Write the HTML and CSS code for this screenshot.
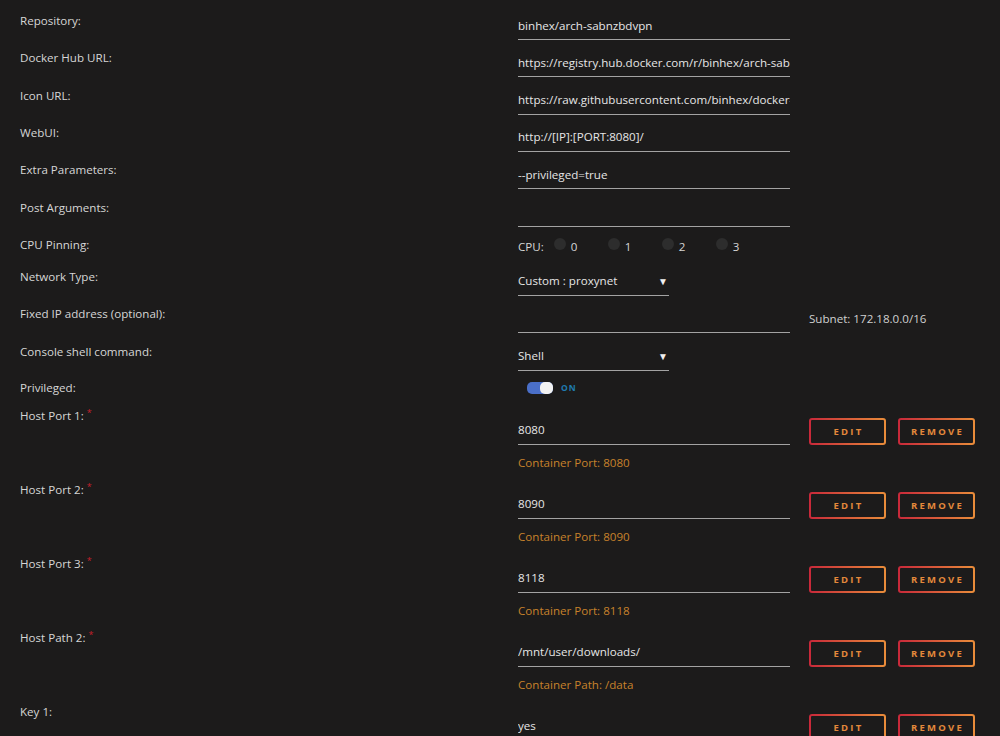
FILE: index.html
```html
<!DOCTYPE html>
<html lang="en">

<head>
  <meta charset="UTF-8" />
  <meta name="viewport" content="width=device-width, initial-scale=1" />
  <title>Edit Container</title>
  <link rel="stylesheet" href="styles.css">
</head>

<body>
  <div class="form">
    <div class="row">
      <div class="label">Repository:</div>
      <div class="field"><input type="text" value="binhex/arch-sabnzbdvpn" /></div>
    </div>
    <div class="row">
      <div class="label">Docker Hub URL:</div>
      <div class="field"><input type="text" value="https://registry.hub.docker.com/r/binhex/arch-sabnzbdvpn/" /></div>
    </div>
    <div class="row">
      <div class="label">Icon URL:</div>
      <div class="field"><input type="text" value="https://raw.githubusercontent.com/binhex/docker-templates/master/binhex/images/sabnzbd-icon.png" /></div>
    </div>
    <div class="row">
      <div class="label">WebUI:</div>
      <div class="field"><input type="text" value="http://[IP]:[PORT:8080]/" /></div>
    </div>
    <div class="row">
      <div class="label">Extra Parameters:</div>
      <div class="field"><input type="text" value="--privileged=true" /></div>
    </div>
    <div class="row">
      <div class="label">Post Arguments:</div>
      <div class="field"><input type="text" value="" /></div>
    </div>
    <div class="row row-cpu">
      <div class="label">CPU Pinning:</div>
      <div class="cpu">
        <span class="cpu-title">CPU:</span>
        <span class="cpu-item"><span class="dot"></span>0</span>
        <span class="cpu-item"><span class="dot"></span>1</span>
        <span class="cpu-item"><span class="dot"></span>2</span>
        <span class="cpu-item"><span class="dot"></span>3</span>
      </div>
    </div>
    <div class="row">
      <div class="label">Network Type:</div>
      <div class="field">
        <div class="select"><span>Custom : proxynet</span><span class="arrow">&#9660;</span></div>
      </div>
    </div>
    <div class="row">
      <div class="label">Fixed IP address (optional):</div>
      <div class="field"><input type="text" value="" /></div>
      <div class="note">Subnet: 172.18.0.0/16</div>
    </div>
    <div class="row row-short">
      <div class="label">Console shell command:</div>
      <div class="field">
        <div class="select"><span>Shell</span><span class="arrow">&#9660;</span></div>
      </div>
    </div>
    <div class="row row-switch">
      <div class="label">Privileged:</div>
      <div class="switch-wrap">
        <span class="switch"></span>
        <span class="switch-text">ON</span>
      </div>
    </div>

    <div class="row row-port">
      <div class="label">Host Port 1:<sup class="req">*</sup></div>
      <div class="field">
        <input type="text" value="8080" />
        <div class="hint">Container Port: 8080</div>
      </div>
      <div class="actions">
        <button class="btn">EDIT</button>
        <button class="btn">REMOVE</button>
      </div>
    </div>
    <div class="row row-port">
      <div class="label">Host Port 2:<sup class="req">*</sup></div>
      <div class="field">
        <input type="text" value="8090" />
        <div class="hint">Container Port: 8090</div>
      </div>
      <div class="actions">
        <button class="btn">EDIT</button>
        <button class="btn">REMOVE</button>
      </div>
    </div>
    <div class="row row-port">
      <div class="label">Host Port 3:<sup class="req">*</sup></div>
      <div class="field">
        <input type="text" value="8118" />
        <div class="hint">Container Port: 8118</div>
      </div>
      <div class="actions">
        <button class="btn">EDIT</button>
        <button class="btn">REMOVE</button>
      </div>
    </div>
    <div class="row row-port">
      <div class="label">Host Path 2:<sup class="req">*</sup></div>
      <div class="field">
        <input type="text" value="/mnt/user/downloads/" />
        <div class="hint">Container Path: /data</div>
      </div>
      <div class="actions">
        <button class="btn">EDIT</button>
        <button class="btn">REMOVE</button>
      </div>
    </div>
    <div class="row row-port">
      <div class="label">Key 1:</div>
      <div class="field">
        <input type="text" value="yes" />
      </div>
      <div class="actions">
        <button class="btn">EDIT</button>
        <button class="btn">REMOVE</button>
      </div>
    </div>
  </div>
</body>

</html>
```

FILE: styles.css
```css
* {
  margin: 0;
  padding: 0;
  box-sizing: border-box;
  font-family: 'Open Sans', 'Noto Sans', sans-serif;
}

body {
  background-color: #1c1b1b;
  color: #d4d4d4;
  font-size: 11.6px;
  overflow: hidden;
}

.form {
  display: flex;
  flex-direction: column;
}

.row {
  display: flex;
  align-items: flex-start;
  height: 37.33px;
}

.row-cpu {
  height: 32px;
}

.row-short {
  height: 36px;
}

.row-switch {
  height: 28px;
}

.row-port {
  height: 74px;
}

.label {
  width: 518px;
  padding-left: 20px;
  padding-top: 13px;
  line-height: 16px;
  color: #d6d6d6;
}

.req {
  color: #c4202c;
  font-size: 9px;
  margin-left: 3px;
  vertical-align: 4px;
  line-height: 0;
}

.field {
  width: 272px;
  padding-top: 14px;
}

.row-port .field {
  padding-top: 24px;
}

input {
  display: block;
  width: 100%;
  height: 26px;
  padding: 0 0 3px;
  border: none;
  border-bottom: 1px solid #a3a3a3;
  background-color: transparent;
  color: #e6e6e6;
  font-size: 11.6px;
  outline: none;
}

.select {
  width: 151px;
  height: 26px;
  padding-bottom: 3px;
  display: flex;
  justify-content: space-between;
  align-items: center;
  border-bottom: 1px solid #a3a3a3;
  color: #e6e6e6;
}

.arrow {
  font-size: 10px;
  margin-right: 1px;
  color: #f0f0f0;
}

.note {
  margin-left: 19px;
  padding-top: 18px;
  line-height: 16px;
  color: #d0d0d0;
}

.hint {
  margin-top: 10px;
  line-height: 16px;
  color: #c7822b;
}

.cpu {
  display: flex;
  align-items: center;
  padding-top: 15px;
  line-height: 16px;
  color: #d6d6d6;
}

.cpu-title {
  margin-right: 10px;
}

.cpu-item {
  display: flex;
  align-items: center;
  width: 54px;
}

.dot {
  width: 12px;
  height: 12px;
  border-radius: 50%;
  background-color: #2d2d2d;
  margin-right: 5px;
  margin-top: -5px;
}

.switch-wrap {
  display: flex;
  align-items: center;
  gap: 8px;
  padding-left: 9px;
  padding-top: 15px;
}

.switch {
  width: 26px;
  height: 12px;
  border-radius: 5px;
  background-color: #4a6fc8;
  display: flex;
  justify-content: flex-end;
}

.switch::after {
  content: '';
  width: 13px;
  height: 12px;
  border-radius: 5px;
  background-color: #f2f2f2;
}

.switch-text {
  font-size: 8.5px;
  font-weight: bold;
  letter-spacing: 1px;
  color: #1f7bb0;
}

.actions {
  display: flex;
  gap: 12px;
  margin-left: 19px;
  padding-top: 23px;
}

.btn {
  width: 77px;
  height: 27px;
  border: 2px solid transparent;
  border-radius: 3px;
  background:
    linear-gradient(#1c1b1b, #1c1b1b) padding-box,
    linear-gradient(90deg, #c8283a, #e98d3a) border-box;
  color: #e3893b;
  font-size: 9.5px;
  font-weight: bold;
  letter-spacing: 2.2px;
  padding-left: 2px;
  cursor: pointer;
}
```
